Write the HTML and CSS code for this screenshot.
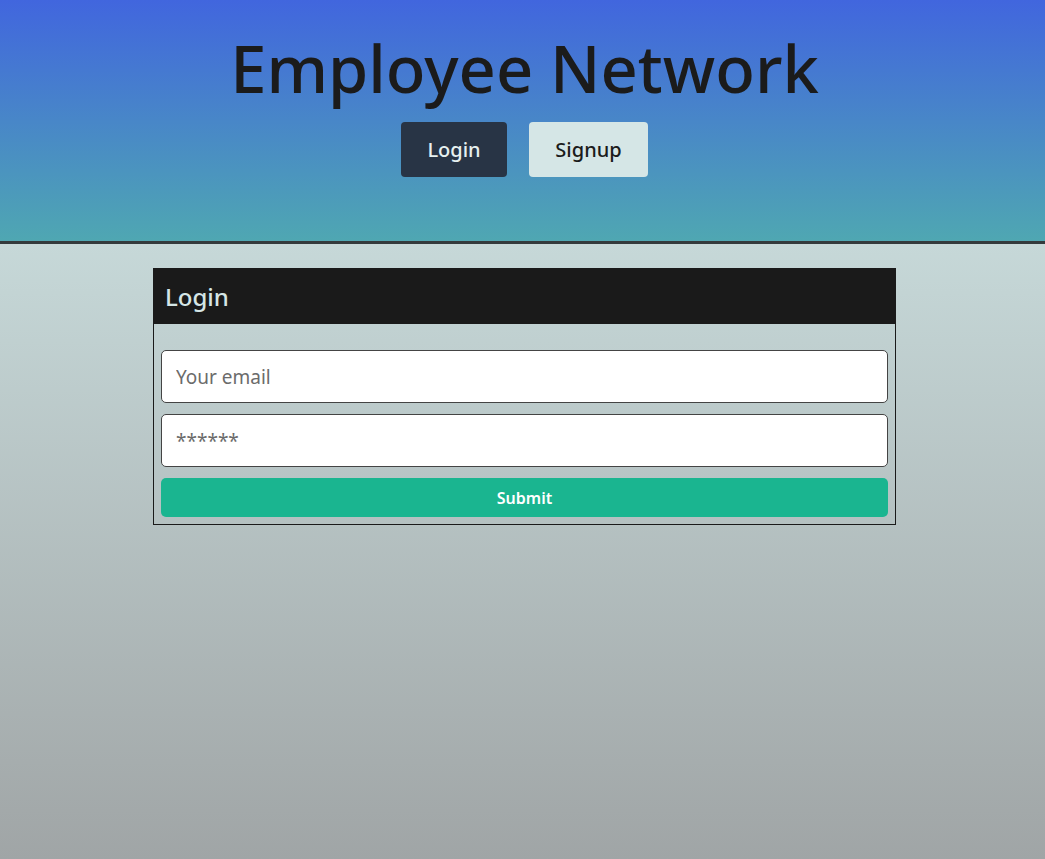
FILE: index.html
```html
<!DOCTYPE html>
<html lang="en">
<head>
<meta charset="utf-8">
<title>Employee Network</title>
<link rel="stylesheet" href="styles.css">
</head>
<body>
<header class="hero">
  <h1 class="hero-title">Employee Network</h1>
  <nav class="hero-nav">
    <button class="nav-btn nav-btn-dark" type="button">Login</button>
    <button class="nav-btn nav-btn-light" type="button">Signup</button>
  </nav>
</header>
<main class="main">
  <section class="card">
    <h2 class="card-head">Login</h2>
    <form class="card-body">
      <input class="field" type="email" placeholder="Your email">
      <input class="field" type="password" placeholder="******">
      <button class="submit" type="button">Submit</button>
    </form>
  </section>
</main>
</body>
</html>
```
FILE: styles.css
```css
* { box-sizing: border-box; }
html, body { margin: 0; padding: 0; }
body {
  min-height: 859px;
  display: flex;
  flex-direction: column;
  font-family: "Noto Sans", "Open Sans", sans-serif;
  background: #a0a5a6;
}
.hero {
  height: 244px;
  background: linear-gradient(to bottom, #4166de 0%, #4fa7b2 100%);
  border-bottom: 3px solid #333a3c;
  display: flex;
  flex-direction: column;
  align-items: center;
  padding: 24px 0 0 4px;
}
.hero-title {
  margin: 0;
  font-size: 65px;
  font-weight: 500;
  line-height: 88px;
  color: #1b1b1b;
}
.hero-nav {
  display: flex;
  gap: 22px;
  margin-top: 10px;
}
.nav-btn {
  height: 55px;
  border: none;
  border-radius: 4px;
  font-family: inherit;
  font-size: 20px;
  font-weight: 500;
  padding: 0;
}
.nav-btn-dark { background: #283445; color: #e6f0f0; width: 106px; }
.nav-btn-light { background: #d5e6e6; color: #1b1b1b; width: 119px; }
.main {
  flex: 1;
  padding: 24px 0 0 4px;
  display: flex;
  justify-content: center;
  align-items: flex-start;
  background: linear-gradient(to bottom, #c6d8d8 0%, #a0a5a6 100%);
}
.card {
  width: 743px;
  border: 1px solid #1a1a1a;
}
.card-head {
  margin: 0;
  height: 55px;
  background: #1a1a1a;
  color: #d5e6e6;
  font-size: 24px;
  font-weight: 500;
  line-height: 55px;
  padding-left: 11px;
}
.card-body {
  display: flex;
  flex-direction: column;
  gap: 11px;
  padding: 26px 7px 7px;
}
.field {
  height: 53px;
  border: 1px solid #444;
  border-radius: 5px;
  background: #fff;
  font-family: inherit;
  font-size: 19px;
  padding: 0 14px;
}
.field::placeholder { color: #6b6b6b; }
.submit {
  height: 39px;
  border: none;
  border-radius: 5px;
  background: #1ab590;
  color: #fff;
  font-family: inherit;
  font-size: 16px;
  font-weight: 600;
}
```
